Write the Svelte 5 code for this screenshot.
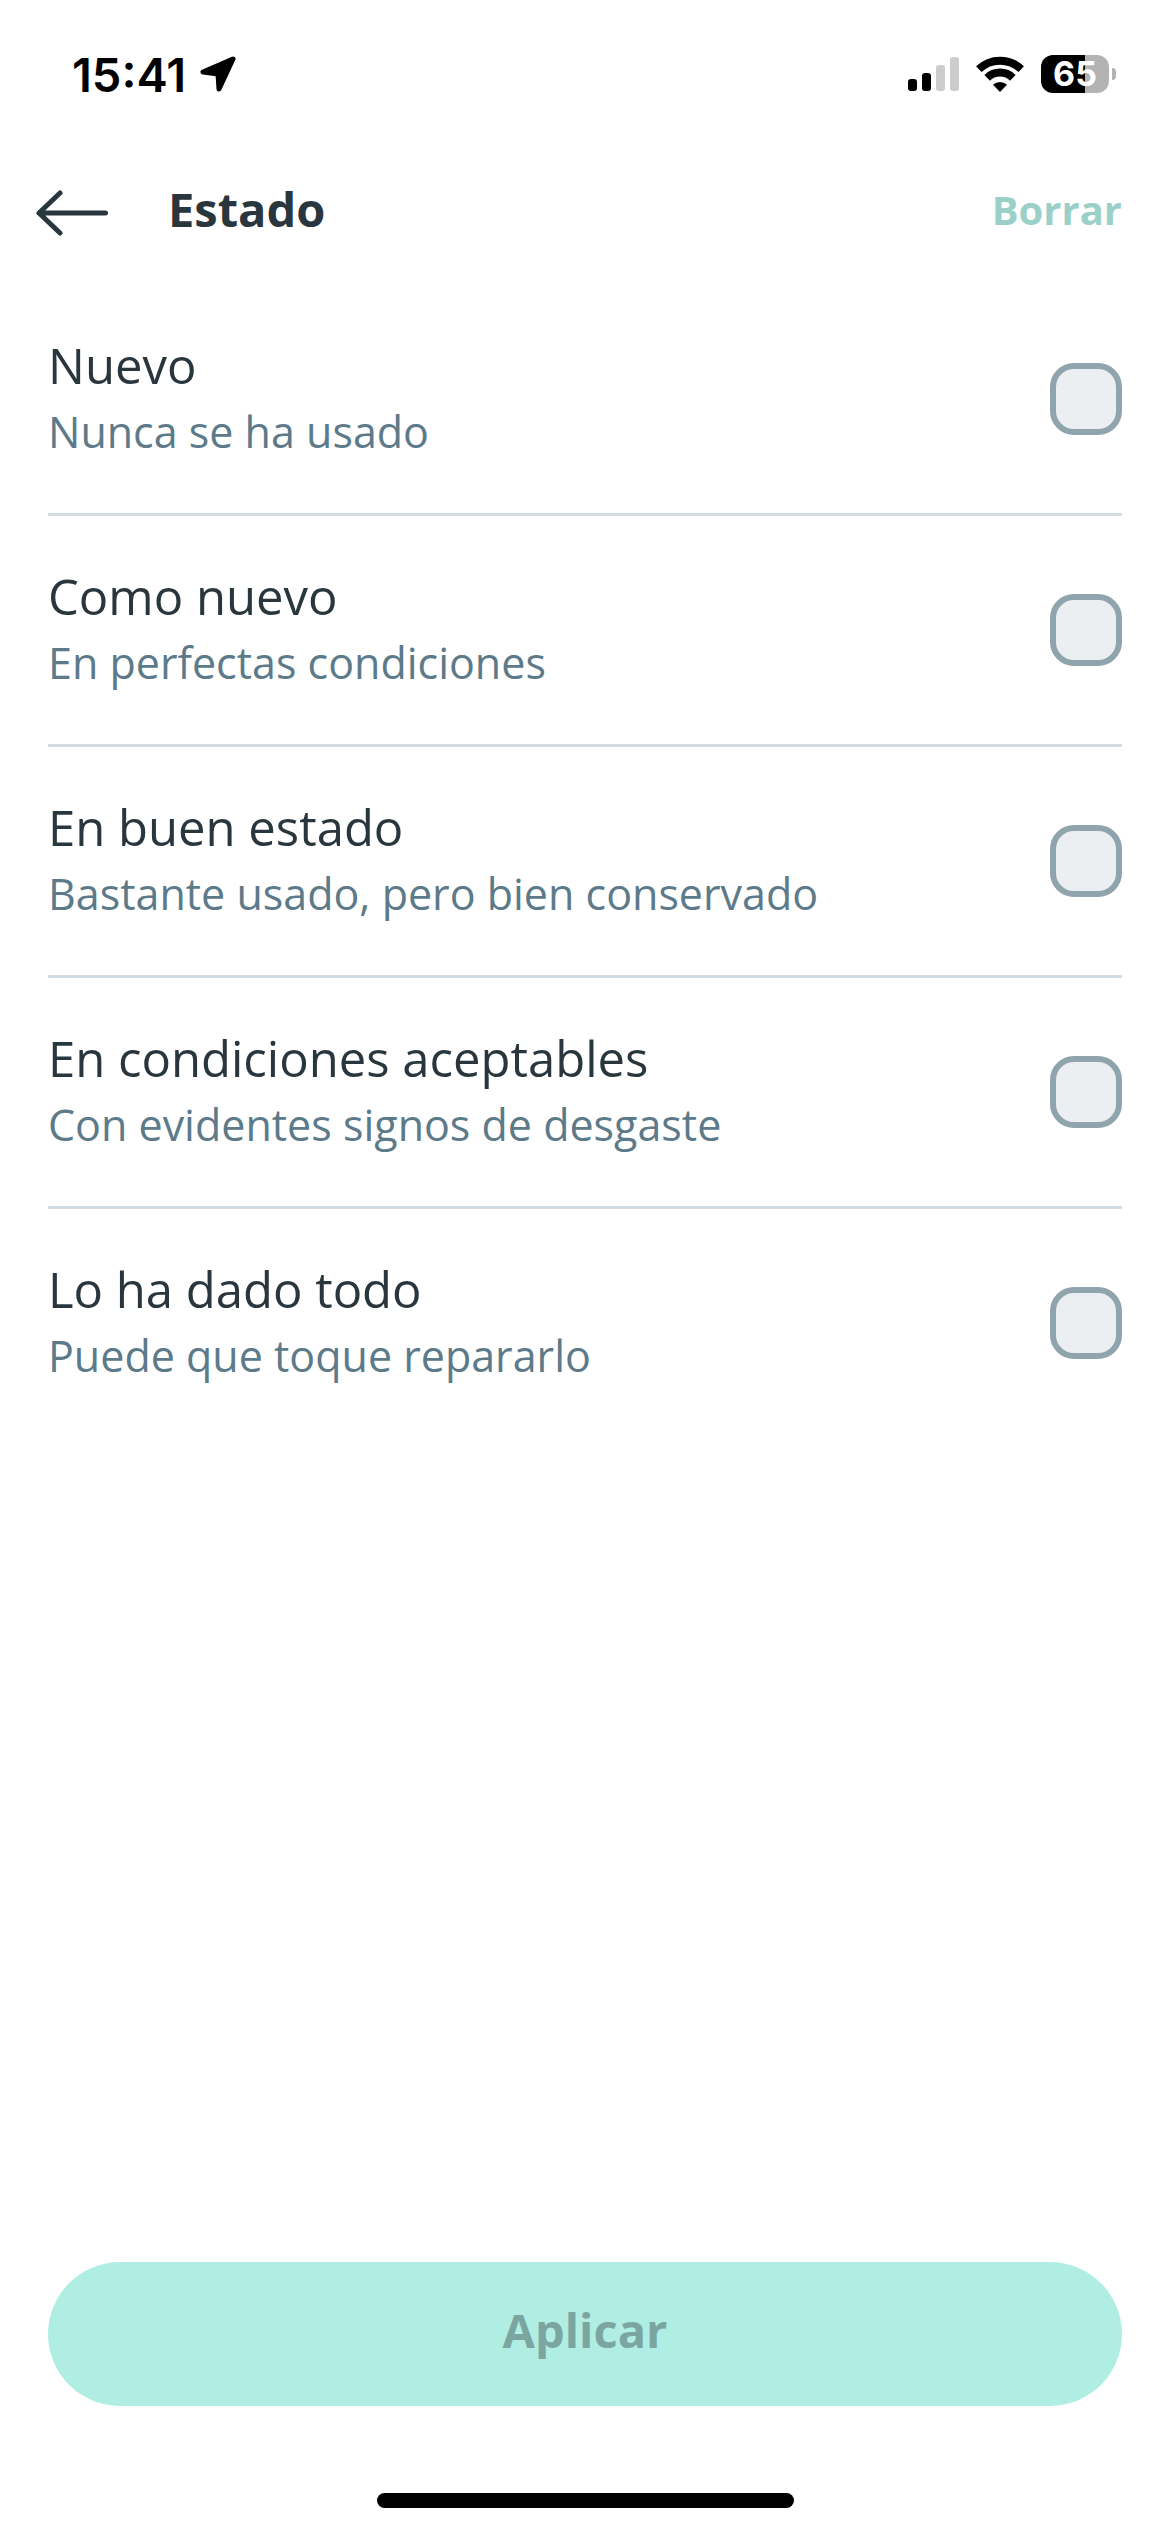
<script lang="ts">
	type Condition = {
		id: string;
		title: string;
		detail: string;
	};

	const conditions: Condition[] = [
		{ id: 'new', title: 'Nuevo', detail: 'Nunca se ha usado' },
		{ id: 'as-new', title: 'Como nuevo', detail: 'En perfectas condiciones' },
		{ id: 'good', title: 'En buen estado', detail: 'Bastante usado, pero bien conservado' },
		{ id: 'fair', title: 'En condiciones aceptables', detail: 'Con evidentes signos de desgaste' },
		{ id: 'worn', title: 'Lo ha dado todo', detail: 'Puede que toque repararlo' }
	];

	const battery = 65;

	let selected: string[] = [];

	const clear = () => {
		selected = [];
	};
</script>

<div class="screen">
	<div class="status">
		<div class="clock">
			<span>15:41</span>
			<svg width="36" height="36" viewBox="0 0 36 36" aria-hidden="true">
				<path
					d="M33 3 L3 16 L18 18 L19 33 Z"
					fill="#000"
					stroke="#000"
					stroke-width="5"
					stroke-linejoin="round"
				/>
			</svg>
		</div>
		<div class="indicators">
			<svg width="51" height="34" viewBox="0 0 51 34" aria-hidden="true">
				<rect x="0" y="22" width="9" height="12" rx="3" />
				<rect x="14" y="16" width="9" height="18" rx="3" />
				<rect x="28" y="8" width="9" height="26" rx="3" fill="#ccc" />
				<rect x="42" y="0" width="9" height="34" rx="3" fill="#ccc" />
			</svg>
			<svg width="48" height="36" viewBox="0 0 48 36" aria-hidden="true">
				<g fill="none" stroke="#000" stroke-width="8">
					<path d="M2.8 13.2 A30.5 30.5 0 0 1 45.2 13.2" />
					<path d="M11.2 21.8 A18.4 18.4 0 0 1 36.8 21.8" />
				</g>
				<path d="M24 36 L17 28.8 A10 10 0 0 1 31 28.8 Z" />
			</svg>
			<div class="battery">
				<span
					class="level"
					style="background: linear-gradient(to right, #000 {battery}%, #b3b3b3 {battery}%)"
				>{battery}</span>
				<span class="nub"></span>
			</div>
		</div>
	</div>

	<header>
		<button class="back" type="button" aria-label="Volver">
			<svg width="72" height="46" viewBox="0 0 72 46" aria-hidden="true">
				<path
					d="M24 3 L3 23 L24 43 M3 23 H69.5"
					fill="none"
					stroke="#29363d"
					stroke-width="5"
					stroke-linecap="round"
					stroke-linejoin="round"
				/>
			</svg>
		</button>
		<h1>Estado</h1>
		<button class="clear" type="button" on:click={clear}>Borrar</button>
	</header>

	<main>
		{#each conditions as condition (condition.id)}
			<label class="row">
				<span class="text">
					<span class="title">{condition.title}</span>
					<span class="detail">{condition.detail}</span>
				</span>
				<input type="checkbox" value={condition.id} bind:group={selected} />
			</label>
		{/each}
	</main>

	<footer>
		<button class="apply" type="button" disabled={!selected.length}>Aplicar</button>
		<div class="home"></div>
	</footer>
</div>

<style>
	:global(body) {
		margin: 0;
		background: #fff;
	}
	.screen {
		display: flex;
		flex-direction: column;
		min-height: 100vh;
		box-sizing: border-box;
		font-family: 'Open Sans', 'Noto Sans', sans-serif;
		color: #29363d;
	}
	button {
		font: inherit;
		color: inherit;
		border: 0;
		padding: 0;
		background: none;
	}
	svg { display: block; flex: none; }

	.status {
		display: flex;
		align-items: center;
		justify-content: space-between;
		height: 148px;
		padding: 0 54px 0 72px;
		box-sizing: border-box;
		color: #000;
		font-family: Inter, 'Liberation Sans', sans-serif;
	}
	.clock {
		display: flex;
		align-items: center;
		gap: 14px;
		font-size: 47px;
		font-weight: 600;
	}
	.indicators { display: flex; align-items: center; gap: 17px; }
	.battery { display: flex; align-items: center; gap: 3px; }
	.level {
		width: 68px;
		height: 38px;
		border-radius: 12px;
		color: #fff;
		font-size: 34px;
		font-weight: 700;
		line-height: 38px;
		text-align: center;
	}
	.nub {
		width: 4px;
		height: 12px;
		border-radius: 0 4px 4px 0;
		background: #b3b3b3;
	}

	header {
		display: flex;
		align-items: center;
		height: 130px;
		padding: 0 48px 0 36px;
		margin-bottom: 7px;
		box-sizing: border-box;
	}
	h1 {
		flex: 1;
		margin: 0 0 0 60px;
		font-size: 47px;
		font-weight: 700;
		line-height: 66px;
	}
	h1, .clear { padding-bottom: 8px; }
	.clear {
		color: #9bd0c8;
		font-size: 40px;
		font-weight: 700;
	}

	main { flex: 1; padding: 0 48px; }
	.row {
		display: flex;
		align-items: center;
		justify-content: space-between;
		height: 228px;
		border-bottom: 3px solid #d3dce2;
	}
	.row:last-child { border-bottom: 0; }
	.text {
		display: flex;
		flex-direction: column;
		gap: 4px;
		padding-bottom: 5px;
	}
	.title { font-size: 49px; line-height: 66px; }
	.detail { font-size: 43px; line-height: 60px; color: #5c7a89; }
	input {
		appearance: none;
		flex: none;
		width: 72px;
		height: 72px;
		margin: 0;
		border: 6px solid #90a4ae;
		border-radius: 24px;
		background: #eceff2;
	}
	input:checked { background: #13c1ac; }

	footer {
		display: flex;
		flex-direction: column;
		align-items: center;
		gap: 87px;
		padding: 0 48px 24px;
	}
	.apply {
		width: 100%;
		height: 144px;
		padding-bottom: 8px;
		border-radius: 72px;
		background: #13c1ac;
		color: #fff;
		font-size: 47px;
		font-weight: 700;
	}
	.apply:disabled { background: #b0eee3; color: #7ba5a0; }
	.home {
		width: 417px;
		height: 15px;
		border-radius: 8px;
		background: #000;
	}
</style>
